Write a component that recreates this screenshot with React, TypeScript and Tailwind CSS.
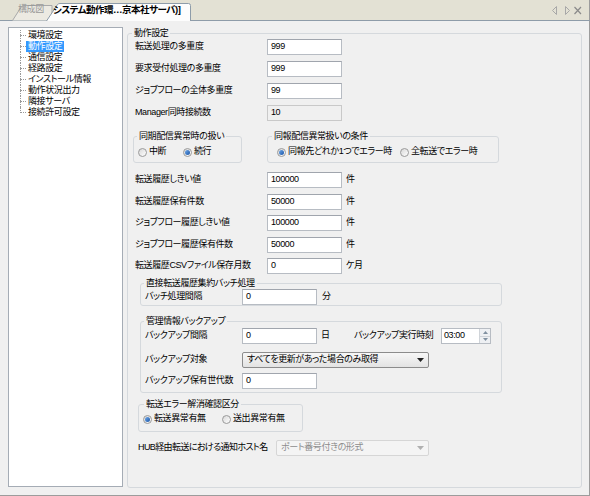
import React from 'react';

const treeItems = ['環境設定', '動作設定', '通信設定', '経路設定', 'インストール情報', '動作状況出力', '隣接サーバ', '接続許可設定'];

const Field: React.FC<{ value: string; w?: string; disabled?: boolean }> = ({ value, w = 'w-[75px]', disabled }) => (
  <div
    className={`${w} h-[16px] shrink-0 border pl-[3px] flex items-center ${
      disabled ? 'bg-[#f0f0f0] border-[#c9c9c9]' : 'bg-white border-[#b7bcc3] border-t-[#a0a5ad]'
    }`}
  >
    {value}
  </div>
);

const Radio: React.FC<{ checked?: boolean; label: string; w?: string }> = ({ checked, label, w = '' }) => (
  <div className={`flex items-center gap-[2px] h-[14px] ${w}`}>
    <span className="w-[9px] h-[9px] rounded-full border border-[#9a9a9a] bg-linear-to-br from-[#d8d8d8] to-white flex items-center justify-center shrink-0">
      {checked && <span className="w-[5px] h-[5px] rounded-full bg-linear-to-br from-[#6fa8e8] to-[#1a56a8]" />}
    </span>
    <span className="whitespace-nowrap">{label}</span>
  </div>
);

const Group: React.FC<{ title: string; className?: string; legendMl?: string; children: React.ReactNode }> = ({
  title,
  className = '',
  legendMl = 'ml-[3px]',
  children,
}) => (
  <fieldset className={`border border-[#d5d9dd] rounded-[3px] ${className}`}>
    <legend className={`${legendMl} px-[2px] leading-[12px]`}>{title}</legend>
    {children}
  </fieldset>
);

const Row: React.FC<{ label: string; value: string; unit?: string; disabled?: boolean }> = ({ label, value, unit, disabled }) => (
  <div className="flex items-center h-[16px] pl-[2px]">
    <span className="w-[132px] shrink-0 whitespace-nowrap">{label}</span>
    <Field value={value} disabled={disabled} />
    {unit && <span className="ml-[4px]">{unit}</span>}
  </div>
);

const Select: React.FC<{ value: string; w: string; disabled?: boolean }> = ({ value, w, disabled }) => (
  <div
    className={`${w} h-[16px] shrink-0 border rounded-[2px] pl-[4px] pr-[4px] flex items-center justify-between ${
      disabled ? 'bg-[#f4f4f4] border-[#d6d6d6] text-[#8d8d8d]' : 'bg-linear-to-b from-[#f7f7f7] to-[#e3e3e3] border-[#8c8c8c]'
    }`}
  >
    <span>{value}</span>
    <svg width="7" height="4" viewBox="0 0 7 4">
      <path d="M0 0h7L3.5 4z" fill={disabled ? '#b0b0b0' : '#222'} />
    </svg>
  </div>
);

export default function App() {
  return (
    <div className="w-[590px] h-[496px] bg-[#f0f0f0] border-r border-b border-[#9c9c9c] flex flex-col text-[9px] tracking-[-0.4px] text-black [font-family:'Liberation_Sans','Noto_Sans_CJK_JP',sans-serif] [font-feature-settings:'palt']">
      {/* TAB BAR */}
      <div className="relative h-[21px] shrink-0 bg-[#e3e1d4]">
        <svg className="absolute inset-0" width="590" height="21" viewBox="0 0 590 21">
          <path d="M0 20.5H48M190 20.5H590" stroke="#8e9ca9" />
          <path d="M12.5 20.5L21.5 6.5Q22.5 5.5 24 5.5H52V20.5" fill="#eceae2" stroke="#a9a9a9" />
          <path d="M46.5 21L57.5 4.5Q58.5 3.5 60 3.5H188.5Q190.5 3.5 190.5 5.5V21" fill="#fdfdfd" stroke="#8e9ca9" />
        </svg>
        <div className="relative flex items-center h-full pl-[18px] pb-[1px]">
          <span className="w-[35px] text-[#999999] text-[9px]">構成図</span>
          <span className="font-bold text-[9.5px] tracking-[-0.5px] whitespace-nowrap">システム動作環…京本社サーバ)]</span>
          <svg className="ml-auto mr-[7px]" width="30" height="9" viewBox="0 0 30 9">
            <path d="M4.5 0.5L0.5 4.5L4.5 8.5Z" fill="none" stroke="#a8a8a8" />
            <path d="M13.5 0.5L17.5 4.5L13.5 8.5Z" fill="none" stroke="#a8a8a8" />
            <path d="M22.5 1L29 8M29 1L22.5 8" stroke="#8a8a8a" strokeWidth="1.2" />
          </svg>
        </div>
      </div>

      {/* BODY */}
      <div className="flex pt-[6px] pl-[8px] gap-[4px]">
        {/* TREE */}
        <div className="w-[115px] h-[460px] shrink-0 bg-white border border-[#a5acb5] pt-[2px] pl-[11px]">
          {treeItems.map((item, i) => (
            <div key={item} className="relative flex items-center h-[11px]">
              <span
                className={`absolute left-0 top-0 border-l border-dotted border-[#9a9a9a] ${
                  i === treeItems.length - 1 ? 'h-[6px]' : 'h-[11px]'
                }`}
              />
              <span className="w-[6px] h-0 border-t border-dotted border-[#9a9a9a] shrink-0" />
              <span className={`block h-[11px] leading-[11px] px-[2px] ${i === 1 ? 'bg-[#3399ff] text-white' : ''}`}>{item}</span>
            </div>
          ))}
        </div>

        {/* MAIN GROUP */}
        <Group title="動作設定" legendMl="ml-[4px]" className="w-[455px] h-[461px]">
          <div className="pl-[5px] flex flex-col">
            <div className="flex flex-col gap-[6px]">
              <Row label="転送処理の多重度" value="999" />
              <Row label="要求受付処理の多重度" value="999" />
              <Row label="ジョブフローの全体多重度" value="99" />
              <Row label="Manager同時接続数" value="10" disabled />
            </div>

            <div className="flex mt-[9px]">
              <Group title="同期配信異常時の扱い" className="w-[109px]">
                <div className="flex pl-[4px] pt-[3px] pb-[3px]">
                  <Radio label="中断" w="w-[45px]" />
                  <Radio label="続行" checked />
                </div>
              </Group>
              <Group title="同報配信異常扱いの条件" legendMl="ml-[4px]" className="ml-[25px] w-[232px]">
                <div className="flex pl-[9px] pt-[3px] pb-[3px]">
                  <Radio label="同報先どれか1つでエラー時" checked w="w-[123px]" />
                  <Radio label="全転送でエラー時" />
                </div>
              </Group>
            </div>

            <div className="flex flex-col gap-[5.5px] mt-[9px]">
              <Row label="転送履歴しきい値" value="100000" unit="件" />
              <Row label="転送履歴保有件数" value="50000" unit="件" />
              <Row label="ジョブフロー履歴しきい値" value="100000" unit="件" />
              <Row label="ジョブフロー履歴保有件数" value="50000" unit="件" />
              <Row label="転送履歴CSVファイル保存月数" value="0" unit="ケ月" />
            </div>

            <Group title="直接転送履歴集約バッチ処理" legendMl="ml-[3px]" className="ml-[7px] mt-[3px] w-[362px]">
              <div className="flex items-center h-[16px] pl-[4px]">
                <span className="w-[97px] shrink-0">バッチ処理間隔</span>
                <Field value="0" />
                <span className="ml-[5px]">分</span>
              </div>
            </Group>

            <Group title="管理情報バックアップ" legendMl="ml-[3px]" className="ml-[7px] mt-[9px] w-[362px]">
              <div className="flex flex-col pl-[4px] pt-[1px] pb-[3px]">
                <div className="flex items-center h-[16px]">
                  <span className="w-[97px] shrink-0">バックアップ間隔</span>
                  <Field value="0" />
                  <span className="ml-[4px] w-[33px] shrink-0">日</span>
                  <span className="w-[87px] shrink-0 whitespace-nowrap">バックアップ実行時刻</span>
                  <div className="w-[50px] h-[16px] flex bg-white border border-[#b7bcc3]">
                    <span className="flex-1 pl-[2px] flex items-center">03:00</span>
                    <div className="w-[11px] flex flex-col border-l border-[#d0d4d9] bg-[#eef0f3]">
                      <div className="flex-1 flex items-center justify-center border-b border-[#d0d4d9]">
                        <svg width="5" height="3" viewBox="0 0 5 3"><path d="M0 3L2.5 0L5 3Z" fill="#8090a0" /></svg>
                      </div>
                      <div className="flex-1 flex items-center justify-center">
                        <svg width="5" height="3" viewBox="0 0 5 3"><path d="M0 0L2.5 3L5 0Z" fill="#8090a0" /></svg>
                      </div>
                    </div>
                  </div>
                </div>
                <div className="flex items-center h-[16px] mt-[8px]">
                  <span className="w-[97px] shrink-0">バックアップ対象</span>
                  <Select value="すべてを更新があった場合のみ取得" w="w-[187px]" />
                </div>
                <div className="flex items-center h-[16px] mt-[5px]">
                  <span className="w-[97px] shrink-0 whitespace-nowrap">バックアップ保有世代数</span>
                  <Field value="0" />
                </div>
              </div>
            </Group>

            <Group title="転送エラー解消確認区分" legendMl="ml-[5px]" className="ml-[5px] mt-[5px] w-[165px]">
              <div className="flex pl-[4px] pt-[2px] pb-[5px]">
                <Radio label="転送異常有無" checked w="w-[79px]" />
                <Radio label="送出異常有無" />
              </div>
            </Group>

            <div className="flex items-center h-[15px] mt-[8px] ml-[5px]">
              <span className="w-[138px] shrink-0 whitespace-nowrap tracking-[-0.6px]">HUB経由転送における通知ホスト名</span>
              <Select value="ポート番号付きの形式" w="w-[153px]" disabled />
            </div>
          </div>
        </Group>
      </div>
    </div>
  );
}
